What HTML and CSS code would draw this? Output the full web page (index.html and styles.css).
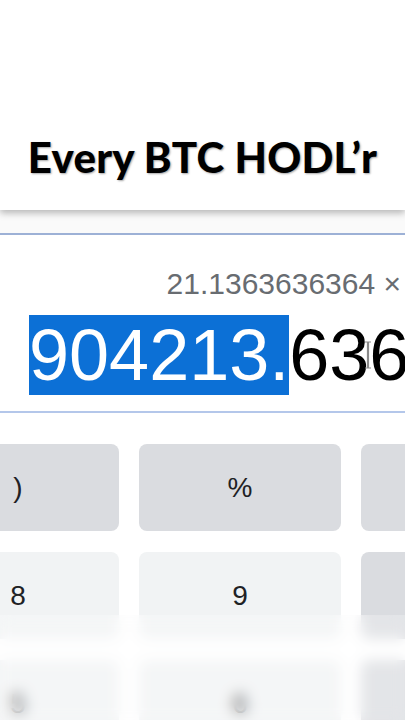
FILE: index.html
```html
<!DOCTYPE html>
<html>
<head>
<meta charset="utf-8">
<link rel="stylesheet" href="styles.css">
</head>
<body>
<div class="page">
  <div class="caption"><span class="caption-text">Every BTC HODL’r</span></div>
  <div class="spacer"></div>
  <div class="display">
    <div class="history">21.1363636364 ×</div>
    <div class="result"><span class="sel">904213.</span>636</div>
    <svg class="ibeam" width="8" height="28" viewBox="0 0 8 28"><path d="M1 1h2.5v26H1M7 1H4.5v26H7M4 1v26" fill="none" stroke="#8a8a8a" stroke-width="1.2"/></svg>
  </div>
  <div class="pad">
    <div class="key op">)</div>
    <div class="key op">%</div>
    <div class="key op"></div>
    <div class="key num">8</div>
    <div class="key num">9</div>
    <div class="key op"></div>
    <div class="key num">5</div>
    <div class="key num">6</div>
    <div class="key op"></div>
  </div>
  <div class="blur"></div>
</div>
</body>
</html>
```
FILE: styles.css
```css
html, body {
  margin: 0;
  padding: 0;
  background: #fff;
}
.page {
  position: relative;
  width: 405px;
  height: 720px;
  overflow: hidden;
  background: #fff;
  font-family: "Liberation Sans", Arial, sans-serif;
}
.caption {
  position: relative;
  z-index: 2;
  height: 210px;
  background: #fff;
  box-shadow: 0 3px 7px rgba(0, 0, 0, 0.28);
  display: flex;
  justify-content: center;
  align-items: flex-start;
}
.caption-text {
  margin-top: 127px;
  font-family: Lato, "Open Sans", sans-serif;
  font-weight: 900;
  font-size: 42px;
  line-height: 60px;
  letter-spacing: 0.2px;
  color: #000;
  white-space: nowrap;
  text-shadow: 1px 1px 2px rgba(0, 0, 0, 0.35);
}
.spacer {
  height: 23px;
  background: #fafafa;
}
.display {
  position: relative;
  height: 176px;
  border-top: 2px solid #9db1d6;
  border-bottom: 2px solid #b4c7ea;
  white-space: nowrap;
}
.history {
  padding-top: 32px;
  padding-right: 4px;
  font-size: 30px;
  line-height: 34px;
  color: #686c71;
  text-align: right;
}
.result {
  margin-top: 14px;
  padding-left: 29px;
  font-size: 72px;
  line-height: 80px;
  color: #000;
}
.sel {
  background: #0c70d6;
  color: #fff;
}
.ibeam {
  position: absolute;
  left: 364px;
  top: 106px;
}
.pad {
  display: grid;
  grid-template-columns: repeat(3, 202px);
  grid-auto-rows: 87px;
  column-gap: 20px;
  row-gap: 21px;
  margin-left: -83px;
  padding-top: 31px;
}
.key {
  border-radius: 8px;
  display: flex;
  align-items: center;
  justify-content: center;
  font-size: 28px;
  color: #202124;
}
.op {
  background: #dadce0;
}
.num {
  background: #f1f3f4;
}
.blur {
  position: absolute;
  left: 0;
  right: 0;
  top: 615px;
  bottom: 0;
  backdrop-filter: blur(7px);
  background: rgba(255, 255, 255, 0.25);
}
```
